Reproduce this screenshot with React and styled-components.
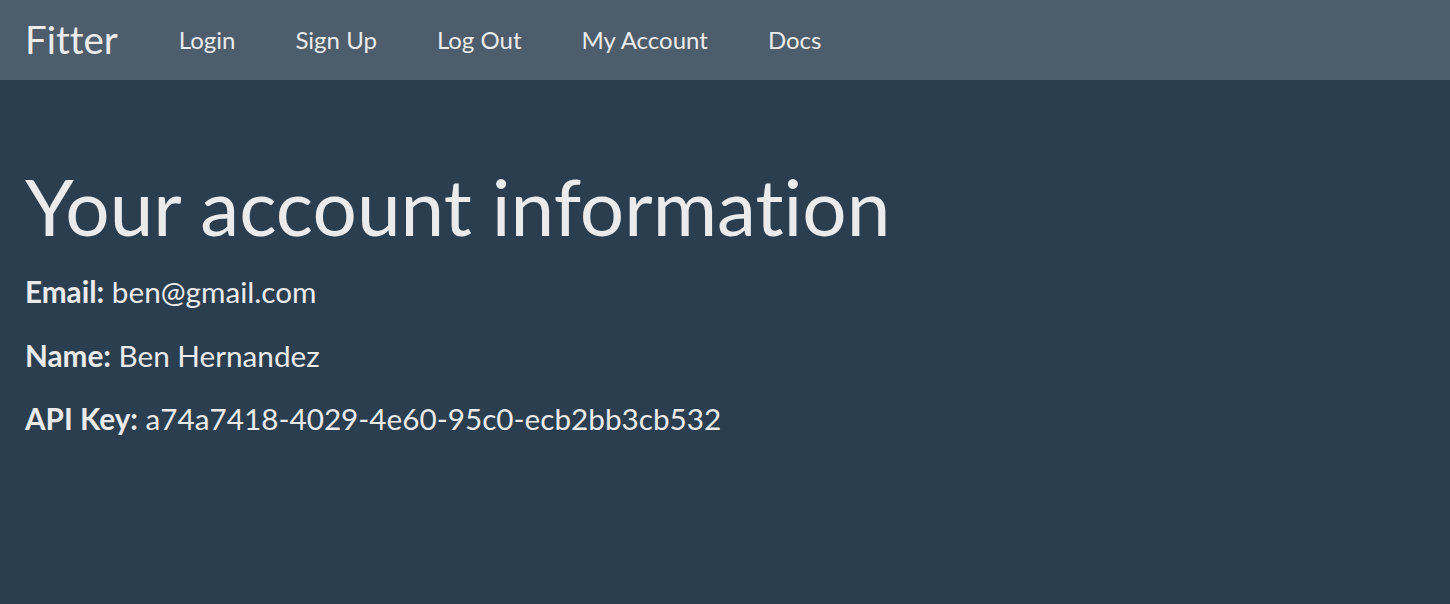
import styled, { createGlobalStyle } from "styled-components";

const GlobalStyle = createGlobalStyle`
  html, body {
    margin: 0;
    padding: 0;
    background: #2b3e50;
    color: #ebebeb;
    font-family: Lato, "Open Sans", sans-serif;
    font-variant-ligatures: none;
  }
`;

const links = ["Login", "Sign Up", "Log Out", "My Account", "Docs"];

const fields = [
  { label: "Email:", value: "ben@gmail.com" },
  { label: "Name:", value: "Ben Hernandez" },
  { label: "API Key:", value: "a74a7418-4029-4e60-95c0-ecb2bb3cb532" },
];

const App = () => {
  return (
    <Page>
      <GlobalStyle />
      <Navbar>
        <Brand href="#">Fitter</Brand>
        <NavList>
          {links.map((link) => (
            <NavItem key={link}>
              <NavLink href="#">{link}</NavLink>
            </NavItem>
          ))}
        </NavList>
      </Navbar>
      <Content>
        <Title>Your account information</Title>
        {fields.map((field) => (
          <Field key={field.label}>
            <Label>{field.label}</Label> {field.value}
          </Field>
        ))}
      </Content>
    </Page>
  );
};

const Page = styled.div`
  min-height: 604px;
  background: #2b3e50;
`;

const Navbar = styled.nav`
  display: flex;
  align-items: center;
  height: 80px;
  background: #4e5d6c;
  padding: 0 25px 2px;
  box-sizing: border-box;
`;

const Brand = styled.a`
  font-size: 38.5px;
  color: #ebebeb;
  text-decoration: none;
  margin-right: 31px;
`;

const NavList = styled.ul`
  display: flex;
  list-style: none;
  margin: 0;
  padding: 0;
`;

const NavItem = styled.li``;

const NavLink = styled.a`
  display: block;
  padding: 0 30px;
  font-size: 24px;
  color: #ebebeb;
  text-decoration: none;
`;

const Content = styled.main`
  padding: 83px 25px 0;
`;

const Title = styled.h1`
  font-size: 78.3px;
  font-weight: 400;
  line-height: 1.1;
  margin: 0 0 21px;
`;

const Field = styled.p`
  font-size: 29.7px;
  margin: 0 0 19px;
  line-height: 1.5;
`;

const Label = styled.strong`
  font-weight: 700;
`;

export default App;
